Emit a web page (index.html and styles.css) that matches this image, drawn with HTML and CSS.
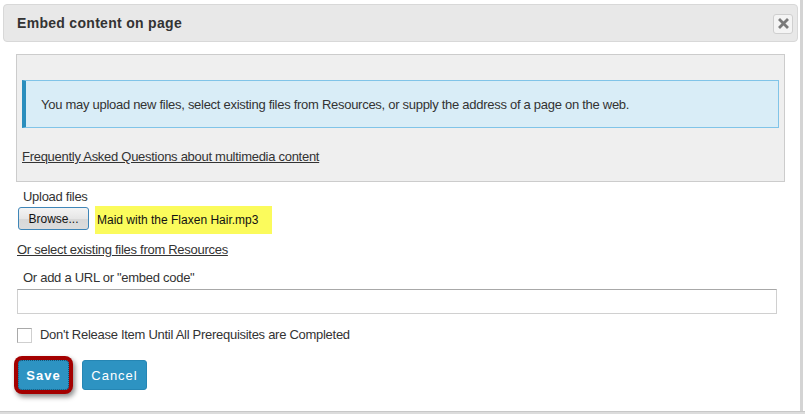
FILE: index.html
```html
<!DOCTYPE html>
<html>
<head>
<meta charset="utf-8">
<link rel="stylesheet" href="styles.css">
</head>
<body>
<div class="page">
  <div class="dialog">
    <div class="header">
      <h1 class="title">Embed content on page</h1>
      <button class="close" aria-label="Close">
        <svg width="11" height="11" viewBox="0 0 11 11"><path d="M2 2 L9 9 M9 2 L2 9" stroke="#7a7a7a" stroke-width="2.8" stroke-linecap="square"/></svg>
      </button>
    </div>
    <div class="content">
      <div class="panel">
        <div class="info">You may upload new files, select existing files from Resources, or supply the address of a page on the web.</div>
        <a class="faq" href="#">Frequently Asked Questions about multimedia content</a>
      </div>
      <div class="label upload-label">Upload files</div>
      <div class="file-row">
        <button class="browse">Browse...</button>
        <span class="filename">Maid with the Flaxen Hair.mp3</span>
      </div>
      <a class="res-link" href="#">Or select existing files from Resources</a>
      <div class="label url-label">Or add a URL or "embed code"</div>
      <input class="url" type="text">
      <label class="check"><span class="box"></span><span>Don't Release Item Until All Prerequisites are Completed</span></label>
      <div class="actions">
        <button class="btn save">Save</button>
        <button class="btn cancel">Cancel</button>
      </div>
    </div>
  </div>
  <div class="behind"></div>
</div>
</body>
</html>
```
FILE: styles.css
```css
html, body {
  margin: 0;
  padding: 0;
  background: #ffffff;
}
body {
  font-family: "Liberation Sans", Arial, sans-serif;
  color: #333333;
}
.page {
  width: 805px;
  height: 414px;
  overflow: hidden;
  background: #ffffff;
}
.dialog {
  width: 795px;
  height: 404px;
  padding: 4px 2px 3px 3px;
  border-right: 3px solid #d4d4d4;
  background: #ffffff;
}
.header {
  height: 36px;
  border: 1px solid #d8d8d8;
  border-radius: 4px;
  background: #e8e8e8;
  display: flex;
  align-items: center;
  justify-content: space-between;
  padding: 0 4px 0 13px;
}
.title {
  margin: 0;
  font-size: 14px;
  font-weight: bold;
  letter-spacing: 0.3px;
  color: #333333;
}
.close {
  width: 20px;
  height: 20px;
  padding: 0;
  margin-top: 1px;
  border: 1px solid #cfcfcf;
  border-radius: 3px;
  background: #f4f4f4;
  display: flex;
  align-items: center;
  justify-content: center;
}
.content {
  padding: 12px 0 0 13px;
  display: flex;
  flex-direction: column;
  align-items: flex-start;
  font-size: 13px;
  letter-spacing: -0.28px;
}
.panel {
  width: 757px;
  border: 1px solid #cccccc;
  background: #efefef;
  padding: 25px 5px 16px 5px;
  display: flex;
  flex-direction: column;
  align-items: flex-start;
}
.info {
  box-sizing: border-box;
  width: 757px;
  height: 48px;
  border: 1px solid #80c4e8;
  border-left: 4px solid #2a8ebd;
  background: #d9edf7;
  padding-left: 15px;
  display: flex;
  align-items: center;
  font-size: 13px;
  color: #333333;
}
.faq {
  margin-top: 21px;
  color: #333333;
  line-height: 16px;
  font-size: 13px;
}
.label {
  line-height: 16px;
  color: #333333;
}
.upload-label {
  margin: 7px 0 0 7px;
}
.file-row {
  display: flex;
  align-items: flex-start;
  margin: 1px 0 0 2px;
  letter-spacing: 0;
}
.browse {
  margin-top: 1px;
  width: 71px;
  height: 23px;
  padding: 0;
  border: 1px solid #3f86b8;
  border-radius: 3px;
  background: linear-gradient(#f4f4f4, #e6e6e6 50%, #d8d8d8 51%, #dcdcdc);
  font-family: "Liberation Sans", Arial, sans-serif;
  font-size: 12px;
  color: #111111;
}
.filename {
  margin-left: 6px;
  height: 28px;
  width: 163px;
  padding: 0 12px 0 2px;
  background: #fbfb5c;
  font-size: 12px;
  color: #111111;
  display: flex;
  align-items: center;
  line-height: 24px;
}
.res-link {
  margin: 8px 0 0 1px;
  color: #333333;
  line-height: 16px;
}
.url-label {
  margin: 12px 0 0 7px;
}
.url {
  margin: 3px 0 0 1px;
  box-sizing: border-box;
  width: 760px;
  height: 25px;
  border: 1px solid #d0d0d0;
  border-top-color: #a8a8a8;
  background: #ffffff;
  padding: 0;
}
.check {
  margin: 13px 0 0 1px;
  display: flex;
  align-items: center;
  gap: 8px;
  line-height: 16px;
  color: #333333;
}
.box {
  box-sizing: border-box;
  width: 15px;
  height: 15px;
  border: 1px solid #a9a9a9;
  border-bottom-color: #cfcfcf;
  border-right-color: #cfcfcf;
  background: #ffffff;
}
.actions {
  margin: 17px 0 0 2px;
  display: flex;
  gap: 13px;
}
.btn {
  height: 30px;
  border: 1px solid #2586b4;
  border-radius: 3px;
  background: #2d93c2;
  color: #ffffff;
  font-family: "Liberation Sans", Arial, sans-serif;
  font-size: 13px;
  letter-spacing: 1px;
  padding: 0;
}
.save {
  width: 51px;
  font-weight: bold;
  border: 1px dotted #10557a;
  box-shadow: 0 0 0 4px #a40000, 2px 3px 5px 4px rgba(0, 0, 0, 0.45);
  border-radius: 4px;
}
.cancel {
  width: 65px;
}
.behind {
  height: 3px;
  border-top: 1px solid #c8c8c8;
  background: #dcdcdc;
}
```
